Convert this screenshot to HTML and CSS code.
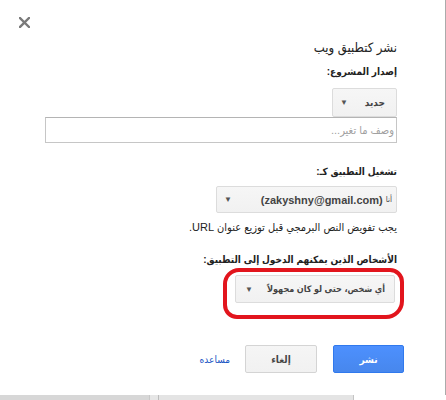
FILE: index.html
```html
<!DOCTYPE html>
<html lang="ar">
<head>
<meta charset="utf-8">
<title>نشر كتطبيق ويب</title>
<link rel="stylesheet" href="styles.css">
</head>
<body>
<div class="page">
  <div class="dialog">
    <div class="close-row">
      <svg class="close" width="11" height="11" viewBox="0 0 11 11" aria-label="إغلاق">
        <path d="M1 1 L10 10 M10 1 L1 10" stroke="#7a7a7a" stroke-width="2.4" stroke-linecap="square"/>
      </svg>
    </div>
    <div class="content" dir="rtl">
      <div class="title">نشر كتطبيق ويب</div>
      <div class="label l1">إصدار المشروع:</div>
      <div class="select s1"><span class="sel-text">جديد</span><span class="arrow">▼</span></div>
      <div class="textarea"><span class="placeholder">وصف ما تغير...</span></div>
      <div class="label l2">تشغيل التطبيق كـ:</div>
      <div class="select s2"><span class="sel-text"><span class="me">أنا</span> (zakyshny@gmail.com)</span><span class="arrow">▼</span></div>
      <div class="helper">يجب تفويض النص البرمجي قبل توزيع عنوان URL.</div>
      <div class="label l3">الأشخاص الذين يمكنهم الدخول إلى التطبيق:</div>
      <div class="highlight">
        <div class="select s3"><span class="sel-text">أي شخص، حتى لو كان مجهولاً</span><span class="arrow">▼</span></div>
      </div>
      <div class="actions">
        <button class="btn primary">نشر</button>
        <button class="btn secondary">إلغاء</button>
        <a class="help" href="#">مساعده</a>
      </div>
    </div>
  </div>
  <div class="bottom-bar">
    <div class="seg seg1"></div>
    <div class="seg seg2"></div>
  </div>
</div>
</body>
</html>
```
FILE: styles.css
```css
html, body {
  margin: 0;
  padding: 0;
  background: #ffffff;
}
body {
  font-family: "Liberation Sans", "DejaVu Sans Condensed", "DejaVu Sans", sans-serif;
  color: #222;
}
.page {
  width: 446px;
  height: 400px;
  position: relative;
  overflow: hidden;
}
.dialog {
  width: 446px;
  height: 395px;
  box-sizing: border-box;
  border-right: 1px solid #ababab;
  display: flex;
  flex-direction: column;
}
.close-row {
  height: 28px;
  box-sizing: border-box;
  padding: 17px 0 0 19px;
}
.close {
  display: block;
}
.content {
  padding-right: 48px;
  padding-left: 45px;
  display: flex;
  flex-direction: column;
  align-items: flex-start;
}
.title {
  margin-top: 10px;
  font-size: 13px;
  line-height: 20px;
  color: #222;
}
.label {
  font-size: 10px;
  font-weight: bold;
  line-height: 16px;
  color: #222;
  white-space: nowrap;
}
.l1 { margin-top: 6px; }
.l2 { margin-top: 21px; }
.l3 { margin-top: 17px; position: relative; z-index: 1; }
.select {
  box-sizing: border-box;
  display: flex;
  align-items: center;
  justify-content: space-between;
  background: linear-gradient(#f6f6f6, #f1f1f1);
  border: 1px solid #dcdcdc;
  border-radius: 2px;
  font-size: 10px;
  font-weight: bold;
  color: #444;
  padding: 0 11px 0 7px;
  white-space: nowrap;
}
.arrow {
  font-size: 8px;
  color: #555;
  font-weight: normal;
}
.s1 {
  margin-top: 8px;
  width: 65px;
  height: 29px;
}
.textarea {
  box-sizing: border-box;
  width: 352px;
  height: 26px;
  border: 1px solid #c6c6c6;
  border-top-color: #b4b4b4;
  padding: 5px 2px 0 0;
  font-size: 11px;
  line-height: 14px;
}
.placeholder {
  color: #a0a0a0;
}
.s2 {
  margin-top: 6px;
  width: 181px;
  height: 27px;
  padding-right: 4px;
  font-size: 11px;
}
.me {
  font-size: 8px;
  font-weight: normal;
  color: #444;
  vertical-align: 2px;
}
.helper {
  margin-top: 6px;
  font-size: 11px;
  line-height: 16px;
  color: #222;
  white-space: nowrap;
}
.highlight {
  box-sizing: border-box;
  margin-right: -7px;
  width: 181px;
  height: 51px;
  border: 4px solid #e2151d;
  border-radius: 16px 14px 18px 14px;
  padding: 3px 5px 0 8px;
}
.s3 {
  width: 160px;
  height: 28px;
  font-size: 9px;
  padding-right: 9px;
  padding-left: 9px;
}
.actions {
  margin-top: 26px;
  margin-right: -7px;
  display: flex;
  align-items: center;
}
.btn {
  box-sizing: border-box;
  height: 28px;
  border-radius: 2px;
  font-family: inherit;
  font-size: 10px;
  font-weight: bold;
  padding: 0;
  cursor: pointer;
}
.primary {
  width: 71px;
  background: linear-gradient(#4d90fe, #4787ed);
  border: 1px solid #3079ed;
  color: #ffffff;
}
.secondary {
  width: 72px;
  margin-right: 16px;
  background: linear-gradient(#f5f5f5, #f1f1f1);
  border: 1px solid #d4d4d4;
  color: #444;
}
.help {
  margin-right: 15px;
  font-size: 10px;
  color: #1a55c4;
  text-decoration: none;
}
.bottom-bar {
  display: flex;
  height: 5px;
}
.seg1 {
  width: 150px;
  background: #d7d7d7;
  border-right: 8px solid #e6e6e6;
  box-shadow: inset -1px 0 0 #c8c8c8;
}
.seg2 {
  width: 194px;
  background: #e4e4e4;
  border-left: 1px solid #bcbcbc;
  border-right: 1px solid #c4c4c4;
}
```
